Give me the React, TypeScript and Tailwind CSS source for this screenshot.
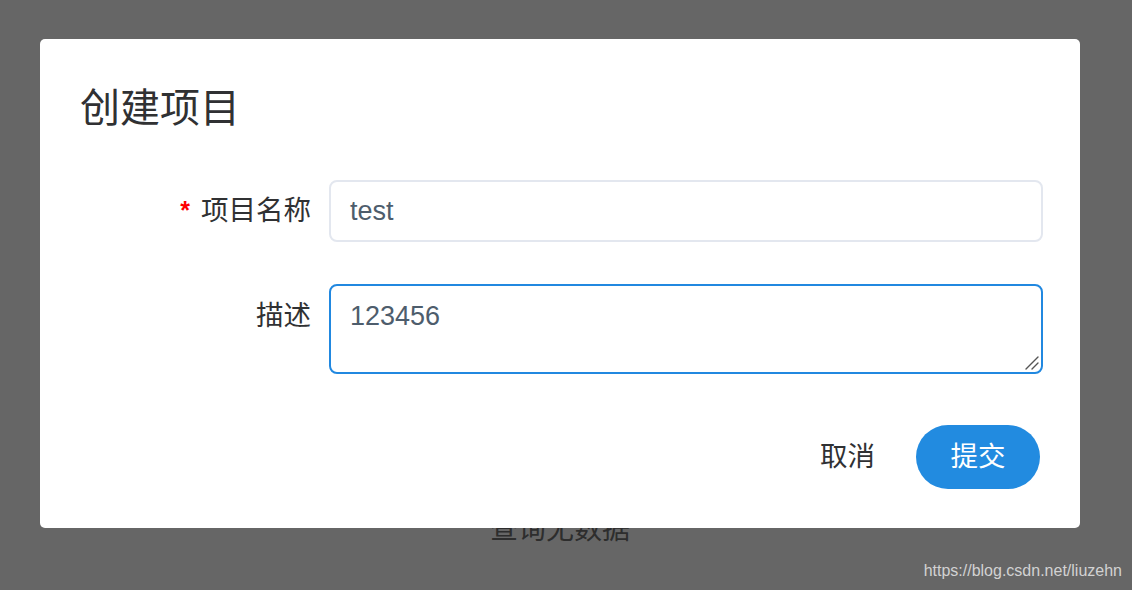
import React from 'react';

const FONT = '"Liberation Sans", "Noto Sans CJK SC", sans-serif';

export default function App() {
  return (
    <div className="relative h-[590px] w-[1132px] overflow-hidden bg-[#666666]" style={{ fontFamily: FONT }}>
      {/* page behind the mask */}
      <div className="flex justify-center pr-[12px] pt-[511px] text-[28px] leading-[38px] text-[#2d2d2d]">查询无数据</div>

      {/* watermark */}
      <div className="absolute bottom-[9px] right-[10px] text-[16px] leading-[20px] text-[#d2d2d2]">
        https://blog.csdn.net/liuzehn
      </div>

      {/* dialog */}
      <div className="absolute left-[40px] top-[39px] flex h-[489px] w-[1040px] flex-col rounded-[5px] bg-white pb-[39px] pl-[40px] pr-[37px] pt-[48px]">
        <h2 className="text-[40px] leading-[43px] font-normal text-[#303133]">创建项目</h2>

        <div className="mt-[50px] flex flex-col gap-[42px]">
          <div className="flex items-center">
            <label className="flex w-[249px] shrink-0 items-center justify-end pr-[18px] text-[27.5px] text-[#303133]">
              <span className="mr-[11px] text-[25px] font-bold text-[#f00]">*</span>
              项目名称
            </label>
            <div className="flex h-[62px] flex-1 items-center rounded-[8px] border-2 border-[#e3e7ef] px-[19px] text-[27px] text-[#4e5d6c]">
              test
            </div>
          </div>

          <div className="flex items-start">
            <label className="w-[249px] shrink-0 pr-[18px] pt-[14px] text-right text-[27.5px] leading-[36px] text-[#303133]">
              描述
            </label>
            <div className="relative flex-1">
              <textarea
                defaultValue="123456"
                className="block h-[90px] w-full resize-none rounded-[8px] border-2 border-[#2188e0] px-[19px] pt-[12px] text-[27px] leading-[36px] text-[#4e5d6c] outline-none"
                style={{ fontFamily: FONT }}
              />
              <svg className="absolute bottom-[4px] right-[4px] h-[14px] w-[14px]" viewBox="0 0 14 14">
                <path d="M1 13 L13 1 M7 13 L13 7" stroke="#555" strokeWidth="1.4" strokeLinecap="round" />
              </svg>
            </div>
          </div>
        </div>

        <div className="mt-auto flex items-center justify-end gap-[41px] pr-[3px]">
          <button className="text-[27.5px] text-[#303133]">取消</button>
          <button className="h-[64px] w-[124px] rounded-full bg-[#228be0] text-[27.5px] text-white">提交</button>
        </div>
      </div>
    </div>
  );
}
